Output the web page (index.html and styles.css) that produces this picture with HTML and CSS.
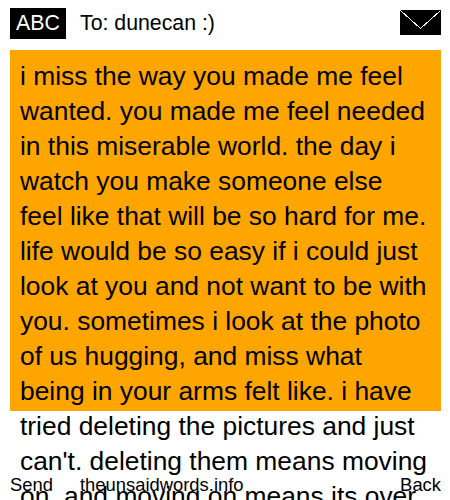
FILE: index.html
```html
<!DOCTYPE html>
<html lang="en">
<head>
<meta charset="UTF-8" />
<title>theunsaidwords.info</title>
<link rel="stylesheet" href="styles.css">
</head>
<body>
<div class="header">
  <div class="abc">ABC</div>
  <div class="to">To: dunecan :)</div>
  <svg class="mail" width="41" height="25" viewBox="0 0 41 25" shape-rendering="crispEdges">
    <rect width="41" height="25" fill="#000"/>
    <path d="M0.5 0.5 L20.5 18.5 L40.5 0.5" fill="none" stroke="#fff" stroke-width="1"/>
  </svg>
</div>
<div class="message">i miss the way you made me feel wanted. you made me feel needed in this miserable world. the day i watch you make someone else feel like that will be so hard for me. life would be so easy if i could just look at you and not want to be with you. sometimes i look at the photo of us hugging, and miss what being in your arms felt like. i have tried deleting the pictures and just can't. deleting them means moving on, and moving on means its over</div>
<!-- Footer sits on top of the overflowing text -->
<div class="footer">
  <span class="send">Send</span>
  <span class="site">theunsaidwords.info</span>
  <span class="back">Back</span>
</div>
</body>
</html>
```

FILE: styles.css
```css
html, body {
  height: 100%;
  overflow: hidden;
}
body {
  margin: 0;
  padding: 8px 9px 0 10px;
  box-sizing: border-box;
  background-color: #fff;
  color: #000;
  font-family: "Liberation Sans", Arial, sans-serif;
  position: relative;
}
.header {
  display: flex;
  align-items: flex-start;
  height: 31px;
  margin-bottom: 11px;
}
.abc {
  background-color: #000;
  color: #fff;
  font-size: 21.3px;
  line-height: 31px;
  width: 56px;
  text-align: center;
}
.to {
  font-size: 21.3px;
  line-height: 31px;
  margin-left: 14px;
  flex: 1;
}
.mail {
  display: block;
  margin-top: 2px;
}
.message {
  background-color: #ffa500;
  height: 361px;
  padding: 9px 10px 0;
  box-sizing: border-box;
  font-size: 26.4px;
  line-height: 35px;
}
.footer {
  position: absolute;
  left: 10px;
  right: 9px;
  bottom: 5px;
  display: flex;
  font-size: 18.4px;
  line-height: 20px;
}
.site {
  margin-left: 27px;
  flex: 1;
}
```
